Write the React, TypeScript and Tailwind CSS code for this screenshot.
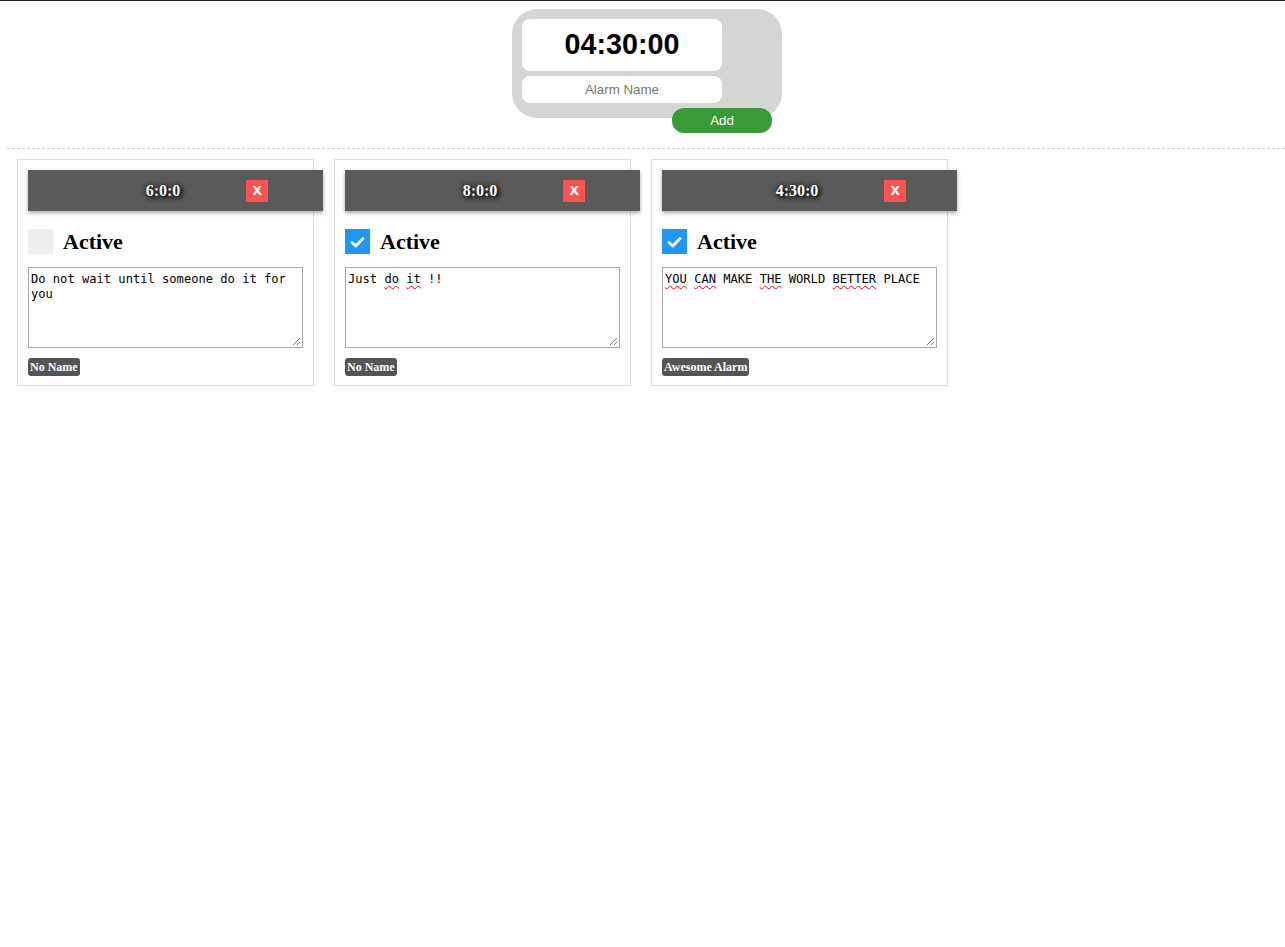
import React from "react";

interface Alarm {
  id: number;
  time: string;
  active: boolean;
  note: { text: string; wavy?: boolean }[];
  name: string;
}

const alarms: Alarm[] = [
  {
    id: 1,
    time: "6:0:0",
    active: false,
    note: [{ text: "Do not wait until someone do it for you" }],
    name: "No Name",
  },
  {
    id: 2,
    time: "8:0:0",
    active: true,
    note: [
      { text: "Just " },
      { text: "do", wavy: true },
      { text: " " },
      { text: "it", wavy: true },
      { text: " !!" },
    ],
    name: "No Name",
  },
  {
    id: 3,
    time: "4:30:0",
    active: true,
    note: [
      { text: "YOU", wavy: true },
      { text: " " },
      { text: "CAN", wavy: true },
      { text: " MAKE " },
      { text: "THE", wavy: true },
      { text: " WORLD " },
      { text: "BETTER", wavy: true },
      { text: " PLACE" },
    ],
    name: "Awesome Alarm",
  },
];

const serif = "font-['Liberation_Serif','Times_New_Roman',serif]";

function AlarmCard({ alarm }: { alarm: Alarm }) {
  return (
    <div className="w-[297px] border border-[#dddddd] px-[10px] pt-[10px] pb-[9px]">
      <div className="flex h-[41px] w-[295px] items-center justify-center bg-[#5a5a5a] pl-[63px] shadow-[0_2px_4px_rgba(0,0,0,0.35)]">
        <span
          className={`text-[16px] font-bold text-white ${serif} [text-shadow:0_0_6px_#000,2px_2px_4px_#000]`}
        >
          {alarm.time}
        </span>
        <button className="ml-[66px] flex h-[22px] w-[22px] shrink-0 items-center justify-center bg-[#ff5252] pb-[2px] font-['Liberation_Sans',Arial,sans-serif] text-[17px] leading-none font-bold text-white">
          x
        </button>
      </div>

      <div className="mt-[18px] flex h-[25px] items-center gap-[10px]">
        {alarm.active ? (
          <div className="flex h-[25px] w-[25px] items-center justify-center bg-[#2196f3]">
            <svg width="15" height="12" viewBox="0 0 15 12" fill="none">
              <polyline points="2,6.5 5.8,10 13,2.5" stroke="white" strokeWidth="2.8" strokeLinecap="round" strokeLinejoin="round" />
            </svg>
          </div>
        ) : (
          <div className="h-[25px] w-[25px] bg-[#eeeeee]" />
        )}
        <span className={`text-[22px] font-bold text-black ${serif} leading-none`}>Active</span>
      </div>

      <div className="relative mt-[13px] h-[81px] w-[275px] border border-[#a9a9a9] px-[2px] pt-[4px] font-['DejaVu_Sans_Mono',monospace] text-[12.1px] leading-[15px] text-black">
        {alarm.note.map((part, i) =>
          part.wavy ? (
            <span key={i} className="underline decoration-[#e00] decoration-wavy decoration-1 underline-offset-2">
              {part.text}
            </span>
          ) : (
            <span key={i} className="whitespace-pre-wrap">
              {part.text}
            </span>
          )
        )}
        <svg className="absolute right-[1px] bottom-[1px]" width="9" height="9" viewBox="0 0 9 9">
          <line x1="1" y1="8" x2="8" y2="1" stroke="#777" strokeWidth="1" />
          <line x1="5" y1="8" x2="8" y2="5" stroke="#777" strokeWidth="1" />
        </svg>
      </div>

      <div className="mt-[10px] flex h-[18px]">
        <span className={`rounded-[3px] bg-[#555555] px-[2px] text-[12px] leading-[18px] font-bold text-white ${serif}`}>
          {alarm.name}
        </span>
      </div>
    </div>
  );
}

export default function App() {
  return (
    <div className="min-h-[947px] w-full border-t border-[#222222] bg-white">
      <div className="flex flex-col items-center pt-[8px] pl-[9px]">
        <div className="flex w-[270px] flex-col gap-[5px] rounded-[25px] bg-[#d5d5d5] px-[10px] pt-[10px] pb-[15px]">
          <div className="flex h-[52px] w-[200px] items-center justify-center rounded-[8px] bg-white font-['Liberation_Sans',Arial,sans-serif] text-[28.7px] font-bold text-black">
            04:30:00
          </div>
          <input
            placeholder="Alarm Name"
            className="h-[27px] w-[200px] rounded-[8px] bg-white text-center font-['Liberation_Sans',Arial,sans-serif] text-[13.33px] text-black outline-none placeholder:text-[#777777]"
          />
        </div>
        <div className="-mt-[10px] flex w-[270px] justify-end pr-[10px]">
          <button className="h-[25px] w-[100px] rounded-[12px] bg-[#3a9a3a] font-['Liberation_Sans',Arial,sans-serif] text-[13.33px] text-white">
            Add
          </button>
        </div>
      </div>

      <div className="mt-[15px] ml-[7px] border-t border-dashed border-[#cccccc]" />

      <div className="mt-[10px] flex gap-[20px] pl-[17px]">
        {alarms.map((a) => (
          <AlarmCard key={a.id} alarm={a} />
        ))}
      </div>
    </div>
  );
}
